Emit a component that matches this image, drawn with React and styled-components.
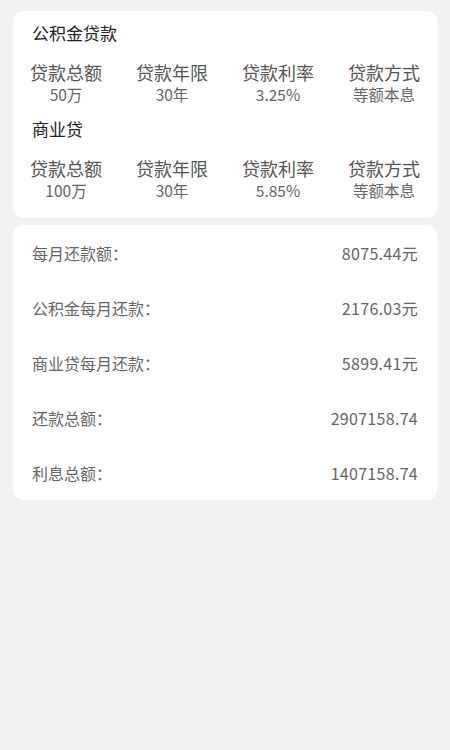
import React from 'react';
import styled, { createGlobalStyle } from 'styled-components';

const GlobalStyle = createGlobalStyle`
  html, body {
    margin: 0;
    padding: 0;
    background: #f2f2f2;
    font-family: "Noto Sans CJK SC", "Noto Sans", sans-serif;
  }
`;

const Page = styled.div`
  min-height: 750px;
  padding: 11px 13px;
  box-sizing: border-box;
  display: flex;
  flex-direction: column;
  gap: 7px;
`;

const Card = styled.div`
  background: #fff;
  border-radius: 10px;
`;

const LoanCard = styled(Card)`
  height: 207px;
  box-sizing: border-box;
  padding: 10px 0 0;
`;

const SectionTitle = styled.div`
  padding-left: 19px;
  font-size: 17px;
  line-height: 24px;
  color: #222;
`;

const InfoGrid = styled.div`
  display: grid;
  grid-template-columns: repeat(4, 1fr);
  margin: 15px 0 13px;
`;

const InfoCell = styled.div`
  display: flex;
  flex-direction: column;
  align-items: center;
`;

const InfoLabel = styled.div`
  font-size: 18px;
  line-height: 24px;
  color: #555;
`;

const InfoValue = styled.div`
  font-size: 15.5px;
  line-height: 20px;
  color: #666;
`;

const ResultCard = styled(Card)`
  height: 275px;
  box-sizing: border-box;
  padding: 0 19px 0 19px;
  display: flex;
  flex-direction: column;
  justify-content: space-around;
`;

const ResultRow = styled.div`
  display: flex;
  justify-content: space-between;
  align-items: center;
  font-size: 16px;
  color: #666;
  height: 55px;
`;

const ResultValue = styled.span`
  letter-spacing: 0.3px;
`;

const sections = [
  {
    title: '公积金贷款',
    items: [
      ['贷款总额', '50万'],
      ['贷款年限', '30年'],
      ['贷款利率', '3.25%'],
      ['贷款方式', '等额本息'],
    ],
  },
  {
    title: '商业贷',
    items: [
      ['贷款总额', '100万'],
      ['贷款年限', '30年'],
      ['贷款利率', '5.85%'],
      ['贷款方式', '等额本息'],
    ],
  },
];

const results = [
  ['每月还款额：', '8075.44元'],
  ['公积金每月还款：', '2176.03元'],
  ['商业贷每月还款：', '5899.41元'],
  ['还款总额：', '2907158.74'],
  ['利息总额：', '1407158.74'],
];

export default function App() {
  return (
    <>
      <GlobalStyle />
      <Page>
        <LoanCard>
          {sections.map((s) => (
            <div key={s.title}>
              <SectionTitle>{s.title}</SectionTitle>
              <InfoGrid>
                {s.items.map(([label, value]) => (
                  <InfoCell key={label}>
                    <InfoLabel>{label}</InfoLabel>
                    <InfoValue>{value}</InfoValue>
                  </InfoCell>
                ))}
              </InfoGrid>
            </div>
          ))}
        </LoanCard>
        <ResultCard>
          {results.map(([label, value]) => (
            <ResultRow key={label}>
              <span>{label}</span>
              <ResultValue>{value}</ResultValue>
            </ResultRow>
          ))}
        </ResultCard>
      </Page>
    </>
  );
}
